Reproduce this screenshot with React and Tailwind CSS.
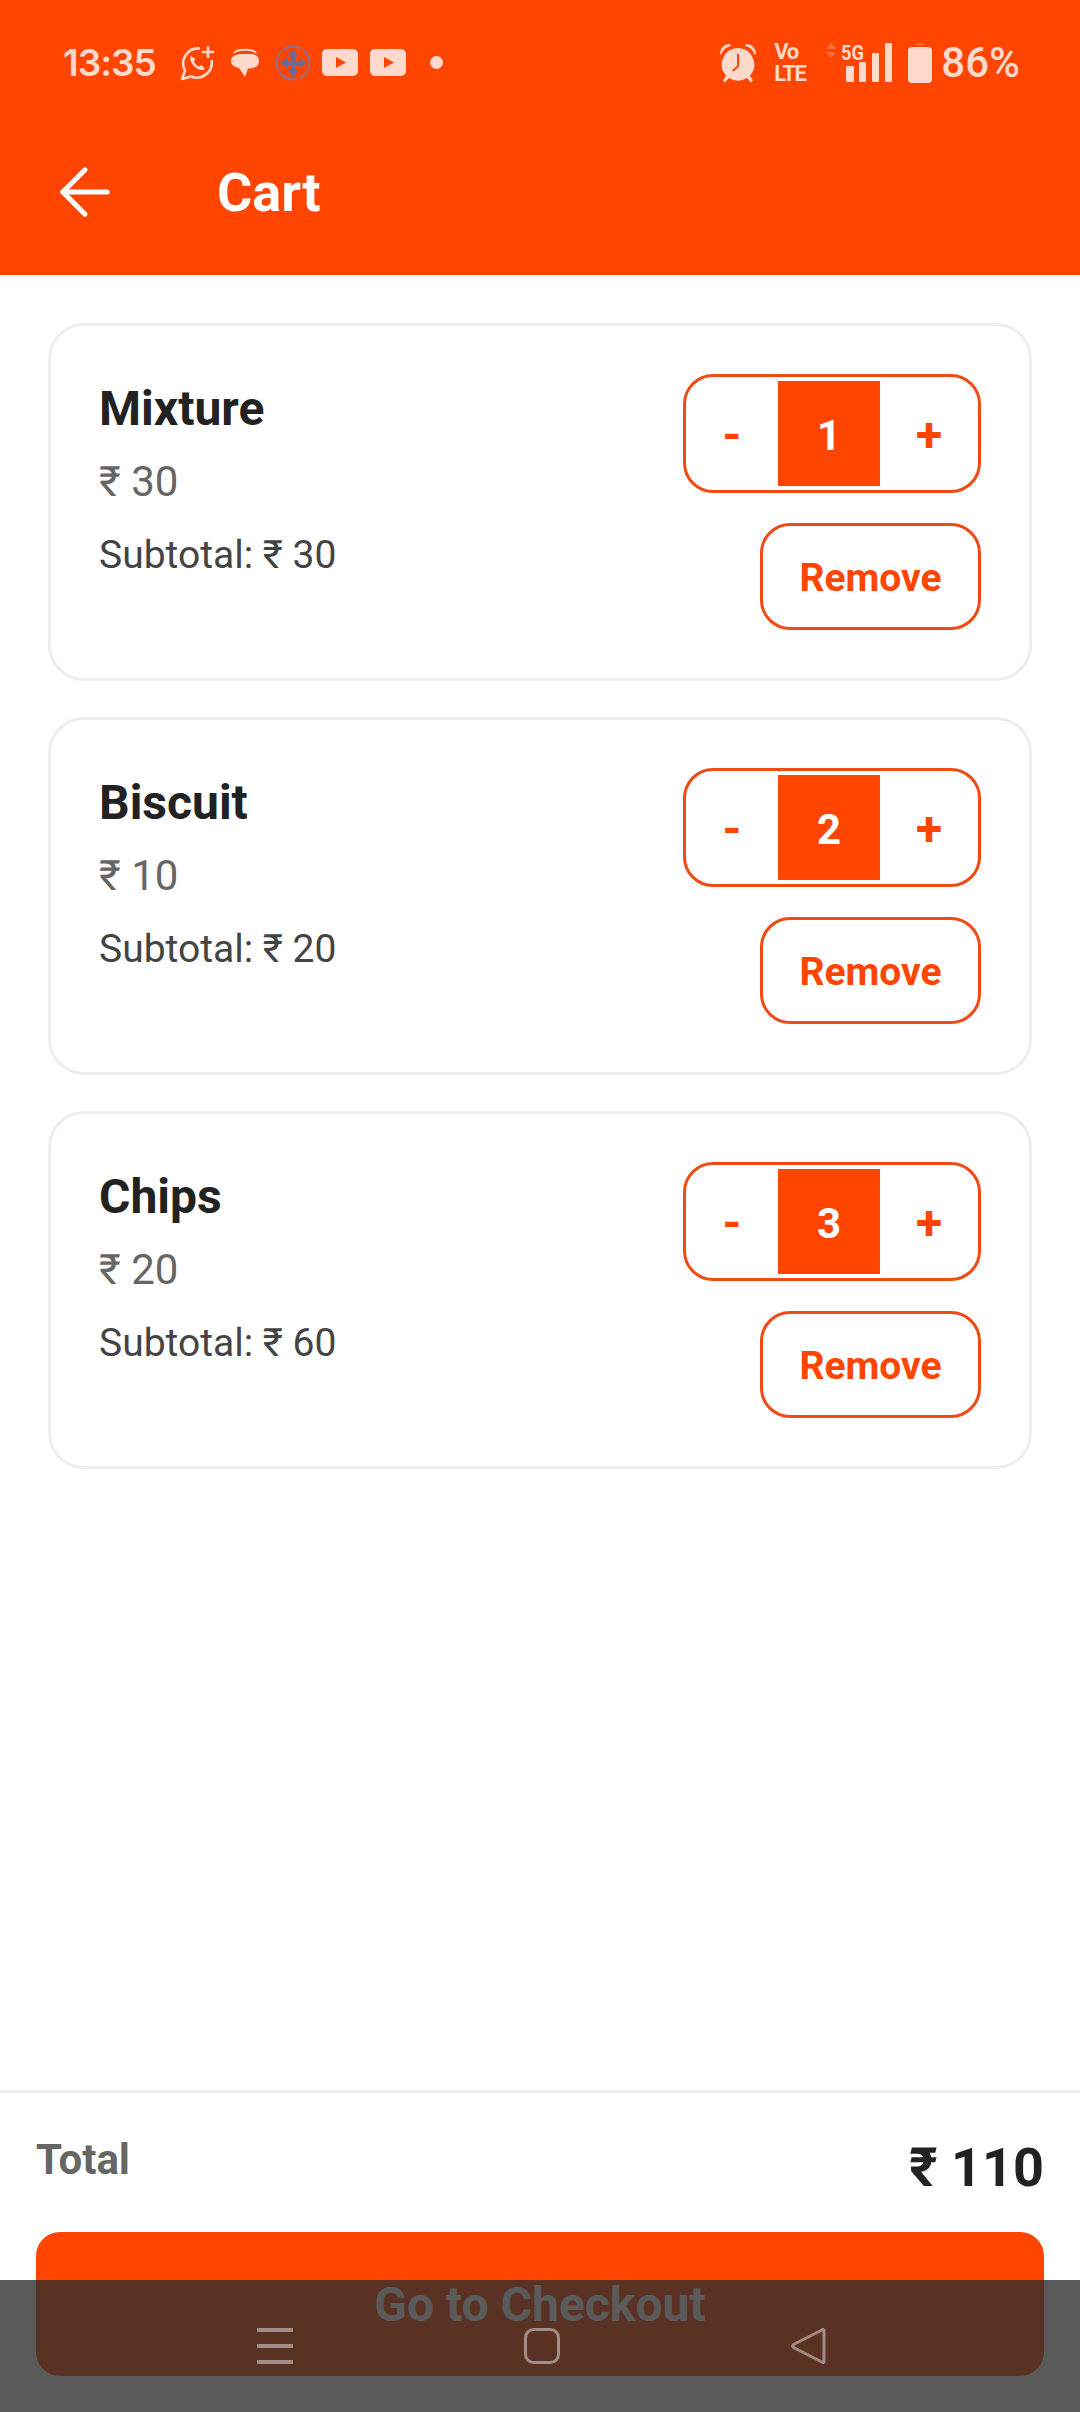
import { ArrowLeft } from 'lucide-react'

const CART = [
  { name: 'Mixture', price: 30, qty: 1 },
  { name: 'Biscuit', price: 10, qty: 2 },
  { name: 'Chips', price: 20, qty: 3 },
]

function WhatsAppPlus() {
  return (
    <svg width="34" height="36" viewBox="0 0 34 36" fill="none" stroke="currentColor" strokeWidth="2.6">
      <path d="M20 3.500A15 15 0 0 0 5 25.500L2 34l9-2.500A15 15 0 0 0 31.500 15" strokeLinejoin="round" />
      <path d="M11 11c-2 3 0 7 3.500 10.500S22 26 25 24l-3.500-4-2.500 1.500c-2-.5-4.500-3-5-5l1.500-2.500z" fill="currentColor" stroke="none" />
      <path d="M28 1v12M22 7h12" />
    </svg>
  )
}

function Chat() {
  return (
    <svg width="30" height="30" viewBox="0 0 30 30" fill="currentColor">
      <path d="M4 5C7 1 23 .5 26 5" fill="none" stroke="currentColor" strokeWidth="2" />
      <path d="M12 6h8c5.500 0 9 2.500 9 7s-3.500 7.500-9 7.500h-2l-3 8.500-6-9C4 19 1 16.500 1 13c0-4.500 5-7 11-7z" />
    </svg>
  )
}

function AppBadge() {
  return (
    <svg width="36" height="38" viewBox="0 0 36 38" fill="none">
      <circle cx="18" cy="19" r="16.500" stroke="#8a7090" strokeWidth="2" strokeDasharray="19 3" />
      <path d="M18 5l5 7-3 1v4h4v-3l8 5-8 5v-3h-4v4l3 1-5 8-5-8 3-1v-4h-4v3l-8-5 8-5v3h4v-4l-3-1z" fill="#6b6b95" />
    </svg>
  )
}

function YouTube() {
  return (
    <svg width="36" height="27" viewBox="0 0 36 27" fill="currentColor">
      <path fillRule="evenodd" d="M5 0h26a5 5 0 0 1 5 5v17a5 5 0 0 1-5 5H5a5 5 0 0 1-5-5V5a5 5 0 0 1 5-5zm9 8v11l10-5.500z" />
    </svg>
  )
}

function Alarm() {
  return (
    <svg width="38" height="40" viewBox="0 0 38 40" fill="currentColor">
      <path d="M1 10C2 4 6 1 11 1l1 2C7 4 4 7 2 12zM37 10C36 4 32 1 27 1l-1 2c5 1 8 4 10 9z" />
      <path fillRule="evenodd" d="M19 5a16.500 16.500 0 0 1 12 27.500l3 5-2 2-4-4.500a16.500 16.500 0 0 1-18 0l-4 4.500-2-2 3-5A16.500 16.500 0 0 1 19 5zm-1 6v12l-5 4 1.500 1.500L20 24V11z" />
    </svg>
  )
}

function Signal() {
  return (
    <svg className="overflow-visible" width="68" height="40" viewBox="0 0 68 40" fill="currentColor">
      <path d="M6 0l5 6H1zM6 15l5-6H1z" opacity="0.3" />
      <text x="16" y="17" fontFamily="Roboto, sans-serif" fontSize="20" fontWeight="700" textLength="23" lengthAdjust="spacingAndGlyphs">5G</text>
      <rect x="21" y="23" width="8" height="16" rx="1" />
      <rect x="34" y="19" width="7" height="20" rx="1" />
      <rect x="47" y="10" width="7" height="29" rx="1" />
      <rect x="60" y="0" width="7" height="39" rx="1" />
    </svg>
  )
}

function Battery() {
  return (
    <svg width="24" height="40" viewBox="0 0 24 40" fill="currentColor">
      <path d="M8 2.500c0-1.500 1-2.500 4-2.500s4 1 4 2.500z" opacity="0.3" />
      <rect x="0" y="4" width="24" height="36" rx="4" />
    </svg>
  )
}

function StatusBar() {
  return (
    <div className="flex h-[132px] items-center pl-[63px] pr-[60px] pb-[7px] text-[#ffd9cc]">
      <span className="w-[91px] font-['Inter',sans-serif] text-[37px] font-semibold tracking-[-1px]">13:35</span>
      <div className="ml-[26px] flex items-center">
        <WhatsAppPlus />
        <div className="ml-[16px]"><Chat /></div>
        <div className="ml-[15px]"><AppBadge /></div>
        <div className="ml-[11px]"><YouTube /></div>
        <div className="ml-[12px]"><YouTube /></div>
        <div className="ml-[24px] size-[13px] rounded-full bg-[#ffd9cc]" />
      </div>
      <div className="ml-auto flex items-center">
        <Alarm />
        <div className="ml-[17px] flex w-[32px] flex-col text-[22px] font-bold leading-[22px] tracking-[-1.5px]">
          <span>Vo</span>
          <span>LTE</span>
        </div>
        <div className="ml-[19px]"><Signal /></div>
        <div className="ml-[15px]"><Battery /></div>
        <span className="ml-[9px] text-[42px] font-medium leading-none">86%</span>
      </div>
    </div>
  )
}

function CartItem({ name, price, qty }) {
  return (
    <div className="flex items-start justify-between rounded-[36px] border-[3px] border-[#eeeeee] bg-white p-[48px]">
      <div className="pt-[5px]">
        <h2 className="text-[48px] font-bold leading-[60px] text-[#222222]">{name}</h2>
        <p className="mt-[13px] text-[42px] leading-[60px] text-[#666666]">₹ {price}</p>
        <p className="mt-[13px] text-[39px] leading-[60px] text-[#444444]">Subtotal: ₹ {price * qty}</p>
      </div>
      <div className="flex flex-col items-end">
        <div className="flex h-[119px] w-[298px] items-center rounded-[30px] border-[3px] border-[#f04a15] text-[#ff4500]">
          <button className="w-[92px] pt-[3px] text-[48px] font-bold">-</button>
          <span className="flex h-[105px] w-[102px] items-center justify-center bg-[#ff4500] pt-[3px] text-[42px] font-bold text-white">{qty}</span>
          <button className="w-[98px] pt-[3px] text-[48px] font-bold">+</button>
        </div>
        <button className="mt-[30px] h-[107px] w-[221px] rounded-[30px] border-[3px] border-[#f04a15] pt-[3px] text-[39px] font-bold text-[#ff4500]">
          Remove
        </button>
      </div>
    </div>
  )
}

function NavOverlay() {
  return (
    <div className="absolute inset-x-0 bottom-0 flex h-[132px] justify-center gap-[231px] bg-[rgba(46,46,46,0.79)] pl-[3px] pt-[48px] text-[#a08c85]">
      <svg width="36" height="36" viewBox="0 0 36 36" fill="currentColor">
        <rect y="0" width="36" height="4" />
        <rect y="16" width="36" height="4" />
        <rect y="32" width="36" height="4" />
      </svg>
      <svg width="36" height="36" viewBox="0 0 36 36" fill="none" stroke="currentColor" strokeWidth="3">
        <rect x="1.500" y="1.500" width="33" height="33" rx="8" />
      </svg>
      <svg width="36" height="36" viewBox="0 0 36 36" fill="none" stroke="currentColor" strokeWidth="3">
        <path d="M33 2.500v31c0 1-1 1.500-2 .5L2.500 19.500c-1-1-1-2 0-3L31 2c1-1 2-.5 2 .5z" strokeLinejoin="round" />
      </svg>
    </div>
  )
}

export default function App() {
  const total = CART.reduce((sum, item) => sum + item.price * item.qty, 0)

  return (
    <div className="relative flex h-[2412px] w-[1080px] flex-col overflow-hidden bg-white font-['Roboto',sans-serif]">
      <header className="h-[275px] bg-[#ff4500]">
        <StatusBar />
        <div className="mt-[22px] flex items-center pl-[47px] text-white">
          <ArrowLeft size={76} strokeWidth={1.6} />
          <h1 className="mt-[2px] ml-[94px] text-[54px] font-bold leading-[66px]">Cart</h1>
        </div>
      </header>

      {/* item list */}
      <main className="flex flex-1 flex-col gap-[36px] px-[48px] pt-[48px]">
        {CART.map((item) => <CartItem key={item.name} {...item} />)}
      </main>

      {/* totals and checkout */}
      <footer className="border-t-[3px] border-[#eeeeee] px-[36px] pb-[36px] pt-[42px]">
        <div className="flex items-start justify-between">
          <span className="text-[42px] font-bold leading-[50px] text-[#666666]">Total</span>
          <span className="mt-[1px] text-[54px] font-bold leading-[64px] text-[#222222]">₹ {total}</span>
        </div>
        <button className="mt-[32px] h-[144px] w-full rounded-[24px] bg-[#ff4500] pt-[2px] text-[48px] font-bold text-white">
          Go to Checkout
        </button>
      </footer>

      <NavOverlay />
    </div>
  )
}
